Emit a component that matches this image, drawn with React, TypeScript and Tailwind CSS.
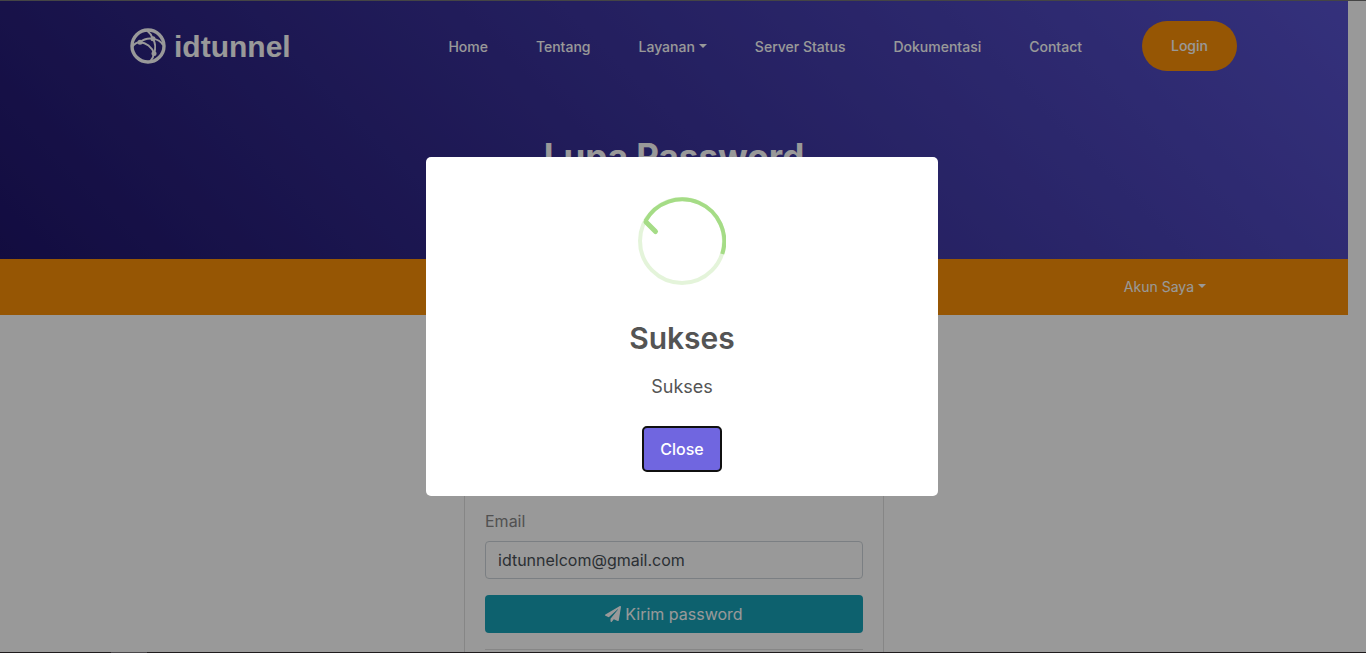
import { useState } from "react"
import { FaPaperPlane } from "react-icons/fa"

const navLinks = [
  { label: "Home" },
  { label: "Tentang" },
  { label: "Layanan", dropdown: true },
  { label: "Server Status" },
  { label: "Dokumentasi" },
  { label: "Contact" },
]

function Caret() {
  return (
    <svg viewBox="0 0 8 4" className="mb-1 ml-1 inline-block h-1 w-2 align-middle" fill="currentColor" aria-hidden="true">
      <path d="M0 0h8L4 4z" />
    </svg>
  )
}

function Logo() {
  return (
    <a href="#" className="flex items-center gap-2 text-white">
      <svg viewBox="0 0 36 36" className="h-9 w-9" fill="none" stroke="currentColor" aria-hidden="true">
        <circle cx="18" cy="18" r="16" strokeWidth="3.4" />
        <path d="M2.500 18.500C4.500 15.500 7 14.300 10 14.200C16 14.500 22 19 24 25.500" strokeWidth="1.900" />
        <path d="M10 14.200C13 11.500 18 10 22.700 10.600C27 11.300 31 13.500 33 17" strokeWidth="1.900" />
        <path d="M17 2.500C19.500 4.500 21.500 7 22.700 10.600C25.500 15 26 20 24 25.500C23.500 28.500 22.500 31 20.500 33" strokeWidth="1.900" />
        <circle cx="10" cy="14.200" r="2.500" fill="currentColor" stroke="none" />
        <circle cx="23" cy="10.800" r="2.500" fill="currentColor" stroke="none" />
        <circle cx="24" cy="25.500" r="2.500" fill="currentColor" stroke="none" />
      </svg>
      <span className="pt-0.5 font-['Liberation_Sans',Arial,sans-serif] text-[30px] leading-9 font-bold">idtunnel</span>
    </a>
  )
}

function SuccessIcon() {
  return (
    <svg viewBox="0 0 88 88" className="h-[88px] w-[88px]" fill="none" strokeWidth="4" aria-hidden="true">
      <circle cx="44" cy="44" r="42" stroke="#a5dc86" strokeOpacity="0.3" />
      <path d="M7.500 24A42 42 0 0 1 84.300 57" stroke="#a5dc86" />
      <path d="M8 25L17.500 34.500" stroke="#a5dc86" strokeWidth="5" strokeLinecap="round" />
    </svg>
  )
}

export default function App() {
  const [open, setOpen] = useState(true)
  const [email, setEmail] = useState("idtunnelcom@gmail.com")

  return (
    <div className="flex h-screen flex-col overflow-hidden bg-white font-['Inter',sans-serif]">
      <div className="h-px shrink-0 bg-[#454545]" />

      <div className="relative min-h-0 flex-1 overflow-hidden">
        <div className="pr-[18px]">
          <header className="bg-[linear-gradient(45deg,#1f156b,#5852cf)] pb-[79px]">
            <div className="mx-auto flex max-w-[1126px] items-center justify-between pt-5">
              <div className="pl-[19px]">
                <Logo />
              </div>
              <div className="flex items-center gap-[60px]">
                <nav className="flex gap-12 pt-0.5 text-sm font-medium text-white">
                  {navLinks.map((link) => (
                    <a key={link.label} href="#" className="whitespace-nowrap">
                      {link.label}
                      {link.dropdown && <Caret />}
                    </a>
                  ))}
                </nav>
                <button type="button" className="h-[50px] w-[95px] shrink-0 rounded-full bg-[#fa9008] text-sm font-medium text-white">
                  Login
                </button>
              </div>
            </div>
            <h1 className="mt-[61px] text-center text-[35px] leading-12 font-bold text-white">Lupa Password</h1>
          </header>

          <div className="bg-[#fa9008]">
            <div className="mx-auto flex h-14 max-w-[1126px] items-center justify-end pr-[31px]">
              <a href="#" className="text-sm text-white">
                Akun Saya
                <Caret />
              </a>
            </div>
          </div>

          <main className="px-4 pt-20">
            <form
              className="mx-auto max-w-[420px] rounded border border-[#dfdfdf] px-5 pt-[113px] pb-5"
              onSubmit={(e) => e.preventDefault()}
            >
              <label htmlFor="email" className="mb-2 block text-base text-[#888888]">
                Email
              </label>
              <input
                id="email"
                type="email"
                value={email}
                onChange={(e) => setEmail(e.target.value)}
                className="block h-[38px] w-full rounded border border-[#ced4da] px-3 text-base text-[#495057]"
              />
              <button
                type="submit"
                className="mt-4 flex h-[38px] w-full items-center justify-center gap-1 rounded bg-[#17a2b8] text-base text-white"
              >
                <FaPaperPlane />
                Kirim password
              </button>
              <hr className="mt-4 border-[#e0e0e0]" />
            </form>
          </main>
        </div>

        {open && (
          <div className="absolute inset-0 flex items-center justify-center bg-black/40 pr-0.5">
            <div
              role="dialog"
              aria-modal="true"
              aria-labelledby="dialog-title"
              className="flex w-full max-w-[512px] flex-col items-center rounded-[5px] bg-white pt-10 pb-6 text-[#545454]"
            >
              <SuccessIcon />
              <h2 id="dialog-title" className="mt-[35px] text-3xl leading-9 font-semibold">
                Sukses
              </h2>
              <p className="mt-[17px] text-lg">Sukses</p>
              <button
                type="button"
                onClick={() => setOpen(false)}
                className="mt-[25px] h-[46px] w-20 rounded-[5px] border-2 border-[#101010] bg-[#7066e0] text-base font-medium text-white"
              >
                Close
              </button>
            </div>
          </div>
        )}
      </div>

      <div className="flex h-px shrink-0 bg-[#1f1b1d]">
        <div className="ml-[111px] w-9 bg-[#4a474a]" />
      </div>
    </div>
  )
}
